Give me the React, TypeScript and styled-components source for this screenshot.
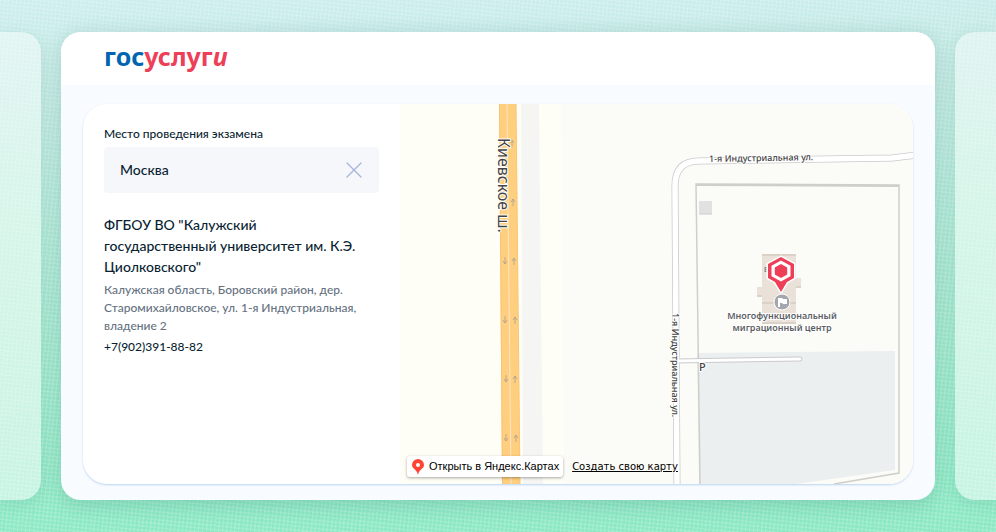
import React from 'react';
import styled, { createGlobalStyle, css } from 'styled-components';

const GlobalStyle = createGlobalStyle`
  *, *::before, *::after { box-sizing: border-box; }
  body { margin: 0; background: #93ebc8; font-family: Lato, "Noto Sans", sans-serif; color: #0b1f33; }
`;

const Stage = styled.main`
  min-height: 100vh;
  overflow: hidden;
  display: grid;
  grid-template-columns: 41px minmax(0, 1fr) 41px;
  gap: 20px;
  padding: 32px 0;
  background:
    repeating-linear-gradient(6deg, rgba(255, 255, 255, 0.15) 0 1px, transparent 2px 4px),
    repeating-linear-gradient(96deg, rgba(255, 255, 255, 0.15) 0 1px, transparent 2px 4px),
    linear-gradient(178deg, #cdeeee 0%, #bde8e0 20%, #a3e6cf 55%, #8ce9c4 90%, #8ae8c2 100%);
`;

const SideCard = styled.div<{ $side: 'left' | 'right' }>`
  background: linear-gradient(180deg, rgba(255, 255, 255, 0.45), rgba(240, 255, 246, 0.6) 40%, rgba(255, 255, 255, 0.5));
  border-radius: ${(p) => (p.$side === 'left' ? '0 20px 20px 0' : '20px 0 0 20px')};
  box-shadow: 0 4px 16px rgba(20, 90, 80, 0.12);
`;

const Window = styled.section`
  display: flex;
  flex-direction: column;
  border-radius: 20px;
  overflow: hidden;
  background: #f8fbff;
  box-shadow: 0 4px 20px rgba(20, 90, 80, 0.2);
`;

const Header = styled.header`
  display: flex;
  align-items: flex-start;
  height: 53px;
  padding: 8px 43px;
  background: #fff;
`;

const Logo = styled.a`
  font: 700 25px/32px "Noto Sans", sans-serif;
  color: #0065b1;
  text-decoration: none;
`;

const LogoAccent = styled.span`
  color: #ee3f58;
`;

const LogoTail = styled.span`
  font-style: italic;
`;

const Panel = styled.div`
  flex: 1;
  display: grid;
  grid-template-columns: 317px minmax(0, 1fr);
  margin: 19px 22px 16px;
  border-radius: 24px;
  overflow: hidden;
  background: #fff;
  box-shadow: 0 1px 2px #bcd5ee;
`;

const Details = styled.div`
  padding: 20px 21px 24px;
`;

const Label = styled.label`
  display: block;
  font-size: 12px;
  font-weight: 500;
  line-height: 20px;
`;

const Field = styled.div`
  display: flex;
  align-items: center;
  height: 46px;
  margin: 3px 0 21px;
  padding: 0 16px;
  border-radius: 4px;
  background: #f5f7fb;
`;

const CityInput = styled.input`
  flex: 1;
  min-width: 0;
  padding: 0;
  border: 0;
  outline: 0;
  background: transparent;
  color: inherit;
  font: 500 14px/24px Lato, sans-serif;
`;

const ClearButton = styled.button`
  display: flex;
  padding: 0;
  border: 0;
  background: none;
  cursor: pointer;
`;

const Place = styled.article`
  max-width: 264px;
`;

const Name = styled.h2`
  margin: 0 0 4px;
  font-size: 14px;
  font-weight: 500;
  line-height: 21px;
`;

const Address = styled.p`
  margin: 0 0 3px;
  color: #66727f;
  font-size: 12px;
  font-weight: 500;
  line-height: 18px;
`;

const Phone = styled.a`
  display: block;
  color: inherit;
  font-size: 12px;
  font-weight: 500;
  line-height: 18px;
  text-decoration: none;
`;

const MapArea = styled.div`
  position: relative;
  min-height: 380px;
  overflow: hidden;
  background: #fbfcf7;
`;

const MapDrawing = styled.svg`
  position: absolute;
  inset: 0;
  width: 100%;
  height: 100%;
`;

const MapLinks = styled.div`
  position: absolute;
  left: 7px;
  bottom: 7px;
  display: flex;
  align-items: center;
  gap: 9px;
`;

const MapLink = styled.a<{ $button?: boolean }>`
  color: #000;
  font: 10px/21px "DejaVu Sans", Verdana, sans-serif;
  ${(p) =>
    p.$button &&
    css`
      display: flex;
      align-items: center;
      gap: 4px;
      padding: 0 4px;
      border-radius: 3px;
      background: #fff;
      box-shadow: 0 1px 3px rgba(0, 0, 0, 0.35);
      font-family: "Liberation Sans", Arial, sans-serif;
      font-size: 11px;
      text-decoration: none;
    `}
`;

const RoadLabel = styled.text`
  font-family: "Noto Sans", sans-serif;
  fill: #444;
  stroke: #fff;
  stroke-width: 2px;
  stroke-linejoin: round;
  paint-order: stroke;
`;

const PlaceLabel = styled(RoadLabel)`
  fill: #5c5f66;
  font-size: 9px;
  font-weight: 600;
  text-anchor: middle;
`;

const upArrows = [[112, 40], [113, 99], [114, 158], [115, 217], [115, 276], [116, 335]];
const downArrows = [[105, 156], [105, 215], [106, 274], [106, 333]];

const Marker = () => (
  <g>
    <path d="M381 153l13 7v14l-7 4-6 10-6-10-7-4v-14z" fill="#ee3f58" stroke="#fff" strokeWidth="3" paintOrder="stroke" strokeLinejoin="round" />
    <path d="M381 156.500l9.500 5.200v10.600l-9.500 5.200-9.500-5.200v-10.600z" fill="#fff" />
    <path d="M381 160l6.200 3.500v7l-6.200 3.500-6.200-3.500v-7z" fill="#ee3f58" />
  </g>
);

const CityMap = () => (
  <MapDrawing viewBox="0 0 513 380" preserveAspectRatio="xMinYMin slice" role="img" aria-label="Карта">
    <rect width="513" height="380" fill="#fbfcf7" />
    <path d="M0 0h161l3 380H0z" fill="#fffef6" />
    <path d="M121 0h18l4 380h-20z" fill="#f5f5f4" />
    <path d="M99 0h17l4 380h-18z" fill="#ffcf80" />
    <path d="M99.500 0l3 380M116 0l4 380" stroke="#fbc472" fill="none" />
    <path d="M107 0l4 380" stroke="#ffe3c6" strokeWidth="1" />
    <g stroke="#a9a08f" strokeWidth="0.8" fill="none">
      {upArrows.map(([x, y]) => (
        <path key={y} d={`M${x} ${y + 3}v-7m-2 3l2-3 2 3`} />
      ))}
      {downArrows.map(([x, y]) => (
        <path key={y} d={`M${x} ${y - 3}v7m-2-3l2 3 2-3`} />
      ))}
    </g>
    <path d="M297 249l198-2v119L396 380H299z" fill="#ebefef" />
    <path d="M300 380L296 80l203 1v288L434 380" fill="none" stroke="#cfcecb" strokeWidth="1.5" />
    <path d="M296 81l203 1" stroke="#cfcecb" strokeWidth="2" />
    <rect x="299" y="97" width="13" height="13" fill="#e1e1e2" />
    <path d="M299 110h13" stroke="#cdcdcf" />
    <path d="M277 380L275 82q0-25 24-25l193-3 26-3" fill="none" stroke="#cacacc" strokeWidth="7" />
    <path d="M276 257l124-2" stroke="#cacacc" strokeWidth="5" strokeLinecap="round" />
    <path d="M277 380L275 82q0-25 24-25l193-3 26-3" fill="none" stroke="#fff" strokeWidth="5.5" />
    <path d="M276 257l124-2" stroke="#fff" strokeWidth="3" strokeLinecap="round" />
    <path d="M362 150h34v24h5v10h-5v36h-34v-27h-5v-10h5z" fill="#eae2d9" />
    <path d="M362 151h34M362 199h34M357 192h5M396 183h5M362 219h34" stroke="#dcd1c6" strokeWidth="2" />
    <text x="364" y="168" fontSize="7" fontFamily="Noto Sans" fill="#555">Е</text>
    <circle cx="382" cy="198" r="8" fill="#a4a7ae" stroke="#fff" />
    <path d="M378 203v-9h4l1 1h4v5h-4l-1-1h-2v4z" fill="#fff" />
    <Marker />
    <PlaceLabel>
      <tspan x="382" y="215">Многофункциональный</tspan>
      <tspan x="382" dy="12">миграционный центр</tspan>
    </PlaceLabel>
    <RoadLabel x="299" y="267" fontSize="11" fontWeight="500">P</RoadLabel>
    <RoadLabel x="309" y="58" fontSize="9" fontWeight="500" transform="rotate(-1 309 58)">1-я Индустриальная ул.</RoadLabel>
    <RoadLabel fontSize="9" fontWeight="500" transform="translate(272 209) rotate(90)">1-я Индустриальная ул.</RoadLabel>
    <RoadLabel fontSize="16" transform="translate(98 34) rotate(90)">Киевское ш.</RoadLabel>
  </MapDrawing>
);

export default function App() {
  const [city, setCity] = React.useState('Москва');
  return (
    <>
      <GlobalStyle />
      <Stage>
        <SideCard $side="left" />
        <Window>
          <Header>
            <Logo href="#">гос<LogoAccent>услуг<LogoTail>и</LogoTail></LogoAccent></Logo>
          </Header>
          <Panel>
            <Details>
              <Label htmlFor="city">Место проведения экзамена</Label>
              <Field>
                <CityInput id="city" value={city} onChange={(e) => setCity(e.target.value)} />
                <ClearButton type="button" aria-label="Очистить" onClick={() => setCity('')}>
                  <svg width="18" height="18" viewBox="0 0 18 18">
                    <path d="M2 2l14 14M16 2L2 16" stroke="#a5b4d8" strokeWidth="1.3" strokeLinecap="round" />
                  </svg>
                </ClearButton>
              </Field>
              <Place>
                <Name>ФГБОУ ВО "Калужский государственный университет им. К.Э. Циолковского"</Name>
                <Address>Калужская область, Боровский район, дер. Старомихайловское, ул. 1-я Индустриальная, владение 2</Address>
                <Phone href="tel:+79023918882">+7(902)391-88-82</Phone>
              </Place>
            </Details>
            <MapArea>
              <CityMap />
              <MapLinks>
                <MapLink $button href="#">
                  <svg width="14" height="16" viewBox="0 0 14 16">
                    <path d="M7 0a6 6 0 0 1 6 6c0 4-5 4-6 10C6 10 1 10 1 6a6 6 0 0 1 6-6z" fill="#ff4433" />
                    <circle cx="7" cy="6" r="2" fill="#fff" />
                  </svg>
                  Открыть в Яндекс.Картах
                </MapLink>
                <MapLink href="#">Создать свою карту</MapLink>
              </MapLinks>
            </MapArea>
          </Panel>
        </Window>
        <SideCard $side="right" />
      </Stage>
    </>
  );
}
